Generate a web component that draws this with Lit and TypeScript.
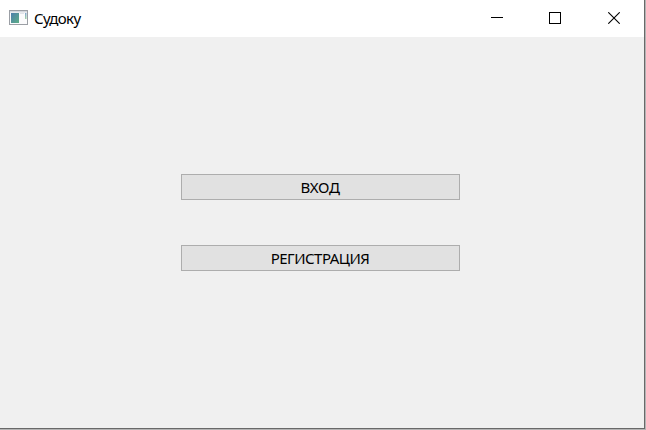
import { LitElement, html, css } from "lit";
import { customElement, property } from "lit/decorators.js";

@customElement("title-bar")
class TitleBar extends LitElement {
  @property() caption = "";

  static styles = css`
    :host {
      display: flex;
      height: 37px;
      flex: none;
      background: #fff;
      align-items: center;
    }
    .icon {
      margin: 0 5px 2px 9px;
      flex: none;
    }
    .caption {
      flex: 1;
      font-size: 15px;
      line-height: 20px;
      padding-bottom: 2px;
      letter-spacing: -0.6px;
      color: #000;
    }
    .controls {
      display: flex;
      height: 37px;
    }
    .control {
      width: 58px;
      display: flex;
      justify-content: center;
      padding-top: 12px;
      box-sizing: border-box;
    }
    .control:last-child {
      width: 60px;
    }
  `;

  render() {
    return html`
      <svg class="icon" width="20" height="16" viewBox="0 0 20 16">
        <defs>
          <linearGradient id="pane" x1="0" y1="0" x2="1" y2="1">
            <stop offset="0" stop-color="#4d7eac" />
            <stop offset="1" stop-color="#5cae86" />
          </linearGradient>
          <linearGradient id="strip" x1="0" y1="0" x2="0" y2="1">
            <stop offset="0" stop-color="#83a6d0" />
            <stop offset="1" stop-color="#a0d2a4" />
          </linearGradient>
        </defs>
        <rect x="0.5" y="0.5" width="18" height="14" fill="#fbfbfc" stroke="#9b9fa5" />
        <rect x="1" y="1" width="17" height="1.5" fill="#d3d7dd" />
        <rect x="2" y="3" width="8" height="10" fill="url(#pane)" />
        <rect x="11" y="3" width="4" height="1" fill="#dfe3e8" />
        <rect x="16" y="3" width="1.5" height="6" fill="url(#strip)" />
      </svg>
      <span class="caption">${this.caption}</span>
      <div class="controls">
        <div class="control">
          <svg width="12" height="12" viewBox="0 0 12 12">
            <rect x="0" y="5" width="12" height="1" fill="#000" />
          </svg>
        </div>
        <div class="control">
          <svg width="12" height="12" viewBox="0 0 12 12">
            <rect x="0.5" y="0.5" width="11" height="11" fill="none" stroke="#000" />
          </svg>
        </div>
        <div class="control">
          <svg width="12" height="12" viewBox="0 0 12 12">
            <path d="M0.3 0.3L11.7 11.7M11.7 0.3L0.3 11.7" stroke="#000" stroke-width="1.1" />
          </svg>
        </div>
      </div>
    `;
  }
}

@customElement("app-root")
class AppRoot extends LitElement {
  static styles = css`
    :host {
      display: block;
      width: 646px;
      height: 430px;
      box-sizing: border-box;
      border-right: 1px solid #b4b4b4;
      border-bottom: 1px solid #b4b4b4;
      font-family: "Noto Sans", "Open Sans", sans-serif;
      overflow: hidden;
    }
    .window {
      display: flex;
      flex-direction: column;
      height: 100%;
      box-sizing: border-box;
      border-right: 1px solid #696969;
      border-bottom: 1px solid #696969;
      background: #f0f0f0;
    }
    .content {
      flex: 1;
      display: flex;
      flex-direction: column;
      gap: 45px;
      padding: 137px 0 0 181px;
    }
    .button {
      width: 279px;
      height: 26px;
      box-sizing: border-box;
      margin: 0;
      padding: 1px 1px 0 0;
      border: 1px solid #adadad;
      border-radius: 0;
      background: #e1e1e1;
      color: #000;
      font-family: inherit;
      font-size: 15px;
      line-height: 23px;
      text-align: center;
    }
    .login {
      letter-spacing: -0.35px;
    }
    .register {
      letter-spacing: -0.5px;
    }
  `;

  render() {
    return html`
      <div class="window">
        <title-bar caption="Судоку"></title-bar>
        <div class="content">
          <button class="button login">ВХОД</button>
          <button class="button register">РЕГИСТРАЦИЯ</button>
        </div>
      </div>
    `;
  }
}
